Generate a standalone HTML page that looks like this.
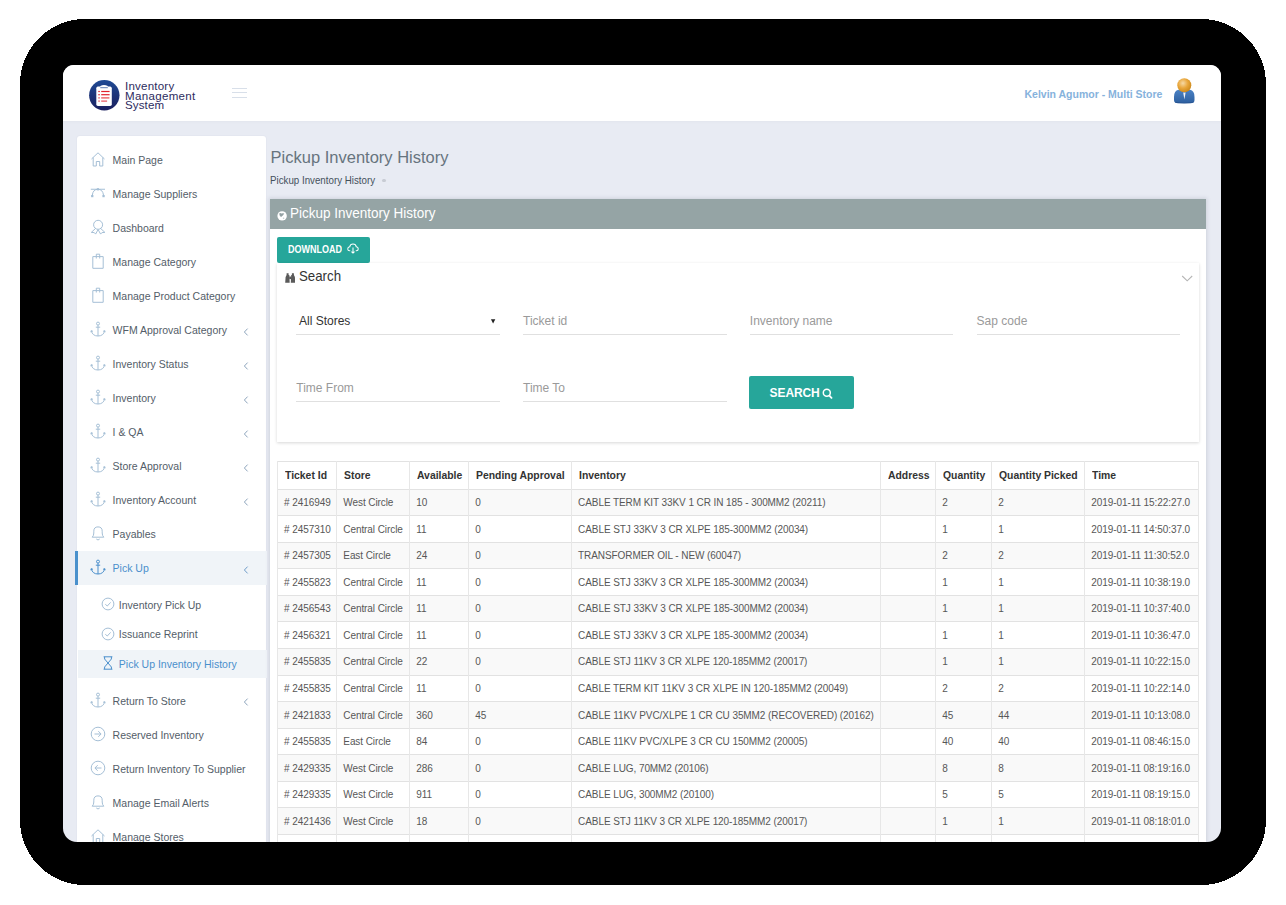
<!DOCTYPE html>
<html><head><meta charset="utf-8"><title>Pickup Inventory History</title>
<style>
html,body{margin:0;padding:0;background:#fff;width:1286px;height:905px;overflow:hidden;font-family:"Liberation Sans", sans-serif;}
.screen{position:absolute;left:0;top:0;width:1286px;height:905px;clip-path:inset(65px 65px 63px 63px round 11px 11px 14px 14px);}
.t{position:absolute;white-space:pre;line-height:1;}
.r{position:absolute;}
</style></head><body>
<svg style="position:absolute;left:0;top:0" width="1286" height="905"><rect x="20" y="19" width="1246" height="866" rx="65" ry="65" fill="#000" shape-rendering="crispEdges"/></svg>
<div class="screen">
<div class="r" style="left:63.00px;top:65.00px;width:1158.00px;height:777.00px;background:#e8ebf3"></div>
<div class="r" style="left:63.00px;top:65.00px;width:1158.00px;height:56.00px;background:#fff"></div>
<div class="r" style="left:63.00px;top:121.00px;width:1158.00px;height:3.00px;background:linear-gradient(rgba(0,0,0,0.018),rgba(0,0,0,0))"></div>
<svg class="r" style="left:88px;top:79px" width="33" height="33" viewBox="0 0 33 33">
<defs><linearGradient id="lg" x1="0" y1="0" x2="0" y2="1"><stop offset="0" stop-color="#1f4a94"/><stop offset="1" stop-color="#1b1f5e"/></linearGradient></defs>
<circle cx="16.3" cy="16.3" r="15.2" fill="url(#lg)"/>
<rect x="8.3" y="7.6" width="15.5" height="19.3" rx="1.6" fill="#fff"/>
<path d="M12.3 8.6 L12.3 7 Q16 5.2 19.8 7 L19.8 8.6 Z" fill="#fff"/>
<path d="M12.3 8.7 H19.8" stroke="#1f4a94" stroke-width="0.7"/>
<g fill="#e0232e"><rect x="10.3" y="11.9" width="1.5" height="1.2"/><rect x="13.2" y="11.9" width="8.4" height="1.2"/>
<rect x="10.3" y="15.1" width="1.5" height="1.2"/><rect x="13.2" y="15.1" width="8.4" height="1.2"/>
<rect x="10.3" y="18.3" width="1.5" height="1.2" opacity="0.85"/><rect x="13.2" y="18.3" width="8.2" height="1.2" opacity="0.85"/>
<rect x="10.3" y="21.5" width="1.5" height="1.2" opacity="0.8"/><rect x="13.2" y="21.5" width="5.9" height="1.2" opacity="0.8"/></g>
</svg>
<div class="t" style="left:124.50px;top:80.69px;font-size:11px;color:#2d2b5e;font-weight:400;transform:scaleX(1.05);transform-origin:0 0;letter-spacing:0.2px">Inventory</div>
<div class="t" style="left:124.50px;top:91.19px;font-size:11px;color:#2d2b5e;font-weight:400;transform:scaleX(1.05);transform-origin:0 0;letter-spacing:0.3px">Management</div>
<div class="t" style="left:124.50px;top:99.59px;font-size:11px;color:#2d2b5e;font-weight:400;transform:scaleX(1.05);transform-origin:0 0;letter-spacing:0.1px">System</div>
<div class="r" style="left:232.00px;top:87.70px;width:15.00px;height:1.40px;background:#d8dfe9"></div>
<div class="r" style="left:232.00px;top:91.90px;width:15.00px;height:1.40px;background:#d8dfe9"></div>
<div class="r" style="left:232.00px;top:96.70px;width:15.00px;height:1.40px;background:#d8dfe9"></div>
<div class="t" style="left:1024.50px;top:89.31px;font-size:10.5px;color:#86b2dc;font-weight:700;">Kelvin Agumor - Multi Store</div>
<svg class="r" style="left:1172px;top:76px" width="25" height="30" viewBox="0 0 25 30">
<defs><radialGradient id="hg" cx="0.4" cy="0.35" r="0.7"><stop offset="0" stop-color="#f6d9a6"/><stop offset="0.5" stop-color="#e9a73c"/><stop offset="1" stop-color="#c98516"/></radialGradient>
<linearGradient id="bg2" x1="0" y1="0" x2="0" y2="1"><stop offset="0" stop-color="#4b82c4"/><stop offset="1" stop-color="#2d5f9f"/></linearGradient></defs>
<path d="M2 21 Q2 14.5 6.5 13.8 Q9 13.4 12.3 16 Q15.6 13.4 18 13.8 Q22.5 14.5 22.5 21 L22.5 24 Q22.5 27.2 18.5 27.2 L6 27.2 Q2 27.2 2 24 Z" fill="url(#bg2)"/><path d="M3 26.3 Q12.3 28 21.5 26.3" stroke="#244f8a" stroke-width="1" fill="none" opacity="0.6"/>
<path d="M11.2 16.5 L13.6 16.5 L12.4 23.5 Z" fill="#f4f4f4"/>
<circle cx="12.3" cy="9.3" r="7" fill="url(#hg)"/>
</svg>
<div class="r" style="left:77.00px;top:136.20px;width:189.20px;height:720.00px;background:#fff;border-radius:3px 3px 0 0;box-shadow:0 0 2px rgba(30,40,80,0.07)"></div>
<svg class="r" style="left:90.30px;top:151.40px" width="16" height="16" viewBox="0 0 16 16" stroke="#a5bfd6" stroke-width="1" fill="#a5bfd6"><path d="M1.5 8 L8 1.8 L14.5 8 M3.2 6.5 V15 H6.3 V10.5 H9.7 V15 H12.8 V6.5" fill="none"/></svg>
<div class="t" style="left:112.60px;top:155.01px;font-size:10.5px;color:#535d68;font-weight:400;">Main Page</div>
<svg class="r" style="left:90.30px;top:185.40px" width="16" height="16" viewBox="0 0 16 16" stroke="#a5bfd6" stroke-width="1" fill="#a5bfd6"><path d="M2.3 10.2 Q3 4.3 7.9 4.3 Q12.8 4.3 13.5 10.2" fill="none"/><path d="M0.8 4.3 H15" stroke-width="1.1"/><rect x="6.8" y="3.2" width="2.2" height="2.2" stroke="none"/><rect x="1.1" y="10" width="2.3" height="2.2" stroke="none"/><rect x="12.4" y="10" width="2.3" height="2.2" stroke="none"/></svg>
<div class="t" style="left:112.60px;top:189.01px;font-size:10.5px;color:#535d68;font-weight:400;">Manage Suppliers</div>
<svg class="r" style="left:90.30px;top:219.40px" width="16" height="16" viewBox="0 0 16 16" stroke="#a5bfd6" stroke-width="1" fill="#a5bfd6"><circle cx="8.1" cy="5.8" r="4.5" fill="none"/><path d="M5.6 9.4 L1.3 13.4 L4.3 13.6 L5.6 15.1 L8.1 10.6 L10.6 15.1 L11.9 13.6 L14.9 13.4 L10.6 9.4" fill="none"/></svg>
<div class="t" style="left:112.60px;top:223.01px;font-size:10.5px;color:#535d68;font-weight:400;">Dashboard</div>
<svg class="r" style="left:90.30px;top:253.40px" width="16" height="16" viewBox="0 0 16 16" stroke="#a5bfd6" stroke-width="1" fill="#a5bfd6"><path d="M2.8 3.6 H13.2 V15.3 H2.8 Z" fill="none"/><path d="M6.3 5.5 V1.2 H9.7 V5.5" fill="none"/></svg>
<div class="t" style="left:112.60px;top:257.01px;font-size:10.5px;color:#535d68;font-weight:400;">Manage Category</div>
<svg class="r" style="left:90.30px;top:287.40px" width="16" height="16" viewBox="0 0 16 16" stroke="#a5bfd6" stroke-width="1" fill="#a5bfd6"><path d="M2.8 3.6 H13.2 V15.3 H2.8 Z" fill="none"/><path d="M6.3 5.5 V1.2 H9.7 V5.5" fill="none"/></svg>
<div class="t" style="left:112.60px;top:291.01px;font-size:10.5px;color:#535d68;font-weight:400;">Manage Product Category</div>
<svg class="r" style="left:90.30px;top:321.40px" width="16" height="16" viewBox="0 0 16 16" stroke="#a5bfd6" stroke-width="1" fill="#a5bfd6"><circle cx="8" cy="2.6" r="1.5" fill="none"/><path d="M8 4.1 V15 M5.8 6.2 H10.2 M1.3 9.8 Q2.5 15 8 15 Q13.5 15 14.7 9.8 M0.8 11.2 L1.3 9.6 L3 10.4 M15.2 11.2 L14.7 9.6 L13 10.4" fill="none"/></svg>
<div class="t" style="left:112.60px;top:325.01px;font-size:10.5px;color:#535d68;font-weight:400;">WFM Approval Category</div>
<svg class="r" style="left:243.00px;top:326.90px" width="6" height="10" viewBox="0 0 6 10"><path d="M4.6 1.6 L1.4 5 L4.6 8.4" fill="none" stroke="#8ea5bd" stroke-width="1"/></svg>
<svg class="r" style="left:90.30px;top:355.40px" width="16" height="16" viewBox="0 0 16 16" stroke="#a5bfd6" stroke-width="1" fill="#a5bfd6"><circle cx="8" cy="2.6" r="1.5" fill="none"/><path d="M8 4.1 V15 M5.8 6.2 H10.2 M1.3 9.8 Q2.5 15 8 15 Q13.5 15 14.7 9.8 M0.8 11.2 L1.3 9.6 L3 10.4 M15.2 11.2 L14.7 9.6 L13 10.4" fill="none"/></svg>
<div class="t" style="left:112.60px;top:359.01px;font-size:10.5px;color:#535d68;font-weight:400;">Inventory Status</div>
<svg class="r" style="left:243.00px;top:360.90px" width="6" height="10" viewBox="0 0 6 10"><path d="M4.6 1.6 L1.4 5 L4.6 8.4" fill="none" stroke="#8ea5bd" stroke-width="1"/></svg>
<svg class="r" style="left:90.30px;top:389.40px" width="16" height="16" viewBox="0 0 16 16" stroke="#a5bfd6" stroke-width="1" fill="#a5bfd6"><circle cx="8" cy="2.6" r="1.5" fill="none"/><path d="M8 4.1 V15 M5.8 6.2 H10.2 M1.3 9.8 Q2.5 15 8 15 Q13.5 15 14.7 9.8 M0.8 11.2 L1.3 9.6 L3 10.4 M15.2 11.2 L14.7 9.6 L13 10.4" fill="none"/></svg>
<div class="t" style="left:112.60px;top:393.01px;font-size:10.5px;color:#535d68;font-weight:400;">Inventory</div>
<svg class="r" style="left:243.00px;top:394.90px" width="6" height="10" viewBox="0 0 6 10"><path d="M4.6 1.6 L1.4 5 L4.6 8.4" fill="none" stroke="#8ea5bd" stroke-width="1"/></svg>
<svg class="r" style="left:90.30px;top:423.40px" width="16" height="16" viewBox="0 0 16 16" stroke="#a5bfd6" stroke-width="1" fill="#a5bfd6"><circle cx="8" cy="2.6" r="1.5" fill="none"/><path d="M8 4.1 V15 M5.8 6.2 H10.2 M1.3 9.8 Q2.5 15 8 15 Q13.5 15 14.7 9.8 M0.8 11.2 L1.3 9.6 L3 10.4 M15.2 11.2 L14.7 9.6 L13 10.4" fill="none"/></svg>
<div class="t" style="left:112.60px;top:427.01px;font-size:10.5px;color:#535d68;font-weight:400;">I &amp; QA</div>
<svg class="r" style="left:243.00px;top:428.90px" width="6" height="10" viewBox="0 0 6 10"><path d="M4.6 1.6 L1.4 5 L4.6 8.4" fill="none" stroke="#8ea5bd" stroke-width="1"/></svg>
<svg class="r" style="left:90.30px;top:457.40px" width="16" height="16" viewBox="0 0 16 16" stroke="#a5bfd6" stroke-width="1" fill="#a5bfd6"><circle cx="8" cy="2.6" r="1.5" fill="none"/><path d="M8 4.1 V15 M5.8 6.2 H10.2 M1.3 9.8 Q2.5 15 8 15 Q13.5 15 14.7 9.8 M0.8 11.2 L1.3 9.6 L3 10.4 M15.2 11.2 L14.7 9.6 L13 10.4" fill="none"/></svg>
<div class="t" style="left:112.60px;top:461.01px;font-size:10.5px;color:#535d68;font-weight:400;">Store Approval</div>
<svg class="r" style="left:243.00px;top:462.90px" width="6" height="10" viewBox="0 0 6 10"><path d="M4.6 1.6 L1.4 5 L4.6 8.4" fill="none" stroke="#8ea5bd" stroke-width="1"/></svg>
<svg class="r" style="left:90.30px;top:491.40px" width="16" height="16" viewBox="0 0 16 16" stroke="#a5bfd6" stroke-width="1" fill="#a5bfd6"><circle cx="8" cy="2.6" r="1.5" fill="none"/><path d="M8 4.1 V15 M5.8 6.2 H10.2 M1.3 9.8 Q2.5 15 8 15 Q13.5 15 14.7 9.8 M0.8 11.2 L1.3 9.6 L3 10.4 M15.2 11.2 L14.7 9.6 L13 10.4" fill="none"/></svg>
<div class="t" style="left:112.60px;top:495.01px;font-size:10.5px;color:#535d68;font-weight:400;">Inventory Account</div>
<svg class="r" style="left:243.00px;top:496.90px" width="6" height="10" viewBox="0 0 6 10"><path d="M4.6 1.6 L1.4 5 L4.6 8.4" fill="none" stroke="#8ea5bd" stroke-width="1"/></svg>
<svg class="r" style="left:90.30px;top:525.40px" width="16" height="16" viewBox="0 0 16 16" stroke="#a5bfd6" stroke-width="1" fill="#a5bfd6"><path d="M2.2 12.2 Q3.8 10.8 3.8 8 V6.2 Q3.8 1.9 8 1.9 Q12.2 1.9 12.2 6.2 V8 Q12.2 10.8 13.8 12.2 Z" fill="none"/><path d="M6.3 14 Q8 16 9.7 14" fill="none"/></svg>
<div class="t" style="left:112.60px;top:529.01px;font-size:10.5px;color:#535d68;font-weight:400;">Payables</div>
<div class="r" style="left:75.00px;top:551.40px;width:191.80px;height:33.20px;background:#f0f4f8"></div>
<div class="r" style="left:75.00px;top:551.40px;width:2.60px;height:33.20px;background:#4a90cc"></div>
<svg class="r" style="left:90.30px;top:559.40px" width="16" height="16" viewBox="0 0 16 16" stroke="#4a8fcc" stroke-width="1" fill="#4a8fcc"><circle cx="8" cy="2.6" r="1.5" fill="none"/><path d="M8 4.1 V15 M5.8 6.2 H10.2 M1.3 9.8 Q2.5 15 8 15 Q13.5 15 14.7 9.8 M0.8 11.2 L1.3 9.6 L3 10.4 M15.2 11.2 L14.7 9.6 L13 10.4" fill="none"/></svg>
<div class="t" style="left:112.60px;top:563.01px;font-size:10.5px;color:#4a8fcc;font-weight:400;">Pick Up</div>
<svg class="r" style="left:243.00px;top:564.90px" width="6" height="10" viewBox="0 0 6 10"><path d="M4.6 1.6 L1.4 5 L4.6 8.4" fill="none" stroke="#6f9cc9" stroke-width="1"/></svg>
<div class="t" style="left:118.80px;top:599.91px;font-size:10.5px;color:#535d68;font-weight:400;">Inventory Pick Up</div>
<svg class="r" style="left:99.90px;top:595.90px" width="16" height="16" viewBox="0 0 16 16" stroke="#a5bfd6" stroke-width="1" fill="#a5bfd6"><circle cx="8" cy="8" r="5.9" fill="none"/><path d="M5.3 8.3 L7.3 10 L10.6 6.4" fill="none"/></svg>
<div class="t" style="left:118.80px;top:629.11px;font-size:10.5px;color:#535d68;font-weight:400;">Issuance Reprint</div>
<svg class="r" style="left:99.90px;top:625.80px" width="16" height="16" viewBox="0 0 16 16" stroke="#a5bfd6" stroke-width="1" fill="#a5bfd6"><circle cx="8" cy="8" r="5.9" fill="none"/><path d="M5.3 8.3 L7.3 10 L10.6 6.4" fill="none"/></svg>
<div class="r" style="left:77.50px;top:650.00px;width:189.30px;height:28.00px;background:#f0f4f8"></div>
<svg class="r" style="left:100.00px;top:654.50px" width="16" height="16" viewBox="0 0 16 16" stroke="#4a8fcc" stroke-width="1" fill="#4a8fcc"><path d="M3.6 1.8 H12.4 M3.6 14.2 H12.4 M4.6 1.8 V4 L8 8 L4.6 12 V14.2 M11.4 1.8 V4 L8 8 L11.4 12 V14.2" fill="none"/></svg>
<div class="t" style="left:118.80px;top:658.71px;font-size:10.5px;color:#4a8fcc;font-weight:400;">Pick Up Inventory History</div>
<svg class="r" style="left:90.30px;top:691.90px" width="16" height="16" viewBox="0 0 16 16" stroke="#a5bfd6" stroke-width="1" fill="#a5bfd6"><circle cx="8" cy="2.6" r="1.5" fill="none"/><path d="M8 4.1 V15 M5.8 6.2 H10.2 M1.3 9.8 Q2.5 15 8 15 Q13.5 15 14.7 9.8 M0.8 11.2 L1.3 9.6 L3 10.4 M15.2 11.2 L14.7 9.6 L13 10.4" fill="none"/></svg>
<div class="t" style="left:112.60px;top:695.51px;font-size:10.5px;color:#535d68;font-weight:400;">Return To Store</div>
<svg class="r" style="left:243.00px;top:697.40px" width="6" height="10" viewBox="0 0 6 10"><path d="M4.6 1.6 L1.4 5 L4.6 8.4" fill="none" stroke="#8ea5bd" stroke-width="1"/></svg>
<svg class="r" style="left:90.30px;top:725.90px" width="16" height="16" viewBox="0 0 16 16" stroke="#a5bfd6" stroke-width="1" fill="#a5bfd6"><circle cx="8" cy="8" r="6.8" fill="none"/><path d="M4.5 8 H11 M8.3 5.2 L11.1 8 L8.3 10.8" fill="none"/></svg>
<div class="t" style="left:112.60px;top:729.51px;font-size:10.5px;color:#535d68;font-weight:400;">Reserved Inventory</div>
<svg class="r" style="left:90.30px;top:759.90px" width="16" height="16" viewBox="0 0 16 16" stroke="#a5bfd6" stroke-width="1" fill="#a5bfd6"><circle cx="8" cy="8" r="6.8" fill="none"/><path d="M11.5 8 H5 M7.7 5.2 L4.9 8 L7.7 10.8" fill="none"/></svg>
<div class="t" style="left:112.60px;top:763.51px;font-size:10.5px;color:#535d68;font-weight:400;">Return Inventory To Supplier</div>
<svg class="r" style="left:90.30px;top:793.90px" width="16" height="16" viewBox="0 0 16 16" stroke="#a5bfd6" stroke-width="1" fill="#a5bfd6"><path d="M2.2 12.2 Q3.8 10.8 3.8 8 V6.2 Q3.8 1.9 8 1.9 Q12.2 1.9 12.2 6.2 V8 Q12.2 10.8 13.8 12.2 Z" fill="none"/><path d="M6.3 14 Q8 16 9.7 14" fill="none"/></svg>
<div class="t" style="left:112.60px;top:797.51px;font-size:10.5px;color:#535d68;font-weight:400;">Manage Email Alerts</div>
<svg class="r" style="left:90.30px;top:827.90px" width="16" height="16" viewBox="0 0 16 16" stroke="#a5bfd6" stroke-width="1" fill="#a5bfd6"><path d="M1.5 8 L8 1.8 L14.5 8 M3.2 6.5 V15 H6.3 V10.5 H9.7 V15 H12.8 V6.5" fill="none"/></svg>
<div class="t" style="left:112.60px;top:831.51px;font-size:10.5px;color:#535d68;font-weight:400;">Manage Stores</div>
<div class="t" style="left:270.60px;top:148.53px;font-size:16.5px;color:#67747e;font-weight:400;">Pickup Inventory History</div>
<div class="t" style="left:270.20px;top:174.81px;font-size:10.5px;color:#44505c;font-weight:400;transform:scaleX(0.928);transform-origin:0 0;">Pickup Inventory History</div>
<div class="r" style="left:382.3px;top:178.8px;width:3.6px;height:3.6px;border-radius:50%;background:#c8ccd4"></div>
<div class="r" style="left:269.80px;top:199.30px;width:936.30px;height:700.00px;background:#fff;box-shadow:0 0 4px 1px rgba(40,50,80,0.13)"></div>
<div class="r" style="left:269.80px;top:199.30px;width:936.30px;height:30.00px;background:#95a4a5"></div>
<svg class="r" style="left:276.7px;top:210.5px" width="10" height="10" viewBox="0 0 10 10">
<circle cx="5.1" cy="4.9" r="4.7" fill="#fff"/><path d="M2.4 2.2 Q3.6 1.6 4.4 2.6 Q5.6 2.2 7.3 2.5 Q6.4 4.2 4.1 6 Q2.6 5 2.4 3.4 Z" fill="#93a1a3"/><circle cx="6.6" cy="7.2" r="0.8" fill="#c5cdd0"/></svg>
<div class="t" style="left:290.20px;top:205.75px;font-size:14px;color:#ffffff;font-weight:400;transform:scaleX(0.964);transform-origin:0 0;">Pickup Inventory History</div>
<div class="r" style="left:277.00px;top:237.30px;width:93.00px;height:25.50px;background:#26a69a;border-radius:2px"></div>
<div class="t" style="left:288.00px;top:245.44px;font-size:10px;color:#fff;font-weight:700;transform:scaleX(0.9);transform-origin:0 0;">DOWNLOAD</div>
<svg class="r" style="left:347.2px;top:243.3px" width="12" height="11" viewBox="0 0 13 12">
<path d="M3.5 8.5 H3 Q0.8 8.5 0.8 6.3 Q0.8 4.2 3 4 Q3.5 1 6.5 1 Q9.6 1 10 4 Q12.2 4.2 12.2 6.3 Q12.2 8.5 10 8.5 H9.5" fill="none" stroke="#fff" stroke-width="1.1"/>
<path d="M6.5 5 V11 M4.8 9.3 L6.5 11 L8.2 9.3" fill="none" stroke="#fff" stroke-width="1.1"/></svg>
<div class="r" style="left:276.80px;top:262.70px;width:922.70px;height:179.00px;background:#fff;box-shadow:0 1px 3px rgba(0,0,0,0.16)"></div>
<svg class="r" style="left:284.8px;top:272.6px" width="10.5" height="10" viewBox="0 0 10.5 10">
<path d="M1.6 0.3 H3.6 V2 H4.3 L4.7 9.8 H0.2 L0.6 4 L1.6 2 Z M8.9 0.3 H6.9 V2 H6.2 L5.8 9.8 H10.3 L9.9 4 L8.9 2 Z" fill="#5a5a5a"/><rect x="4.2" y="3.5" width="2.1" height="2.6" fill="#5a5a5a"/></svg>
<div class="t" style="left:298.50px;top:268.30px;font-size:15px;color:#333;font-weight:400;transform:scaleX(0.885);transform-origin:0 0;">Search</div>
<svg class="r" style="left:1180.5px;top:273.5px" width="13" height="9" viewBox="0 0 13 9"><path d="M1.2 2 L6.2 6.8 L11.2 2" fill="none" stroke="#b5b5b5" stroke-width="1.1"/></svg>
<div class="t" style="left:296.30px;top:315.04px;font-size:12px;color:#333;font-weight:400;"></div>
<div class="r" style="left:296.30px;top:333.80px;width:204.00px;height:1.00px;background:#e0e0e0"></div>
<div class="t" style="left:299.00px;top:315.04px;font-size:12px;color:#333;font-weight:400;">All Stores</div>
<svg class="r" style="left:490px;top:318px" width="7" height="7" viewBox="0 0 7 7"><path d="M0.9 1.2 H5.3 L3.1 5.6 Z" fill="#222"/></svg>
<div class="t" style="left:523.00px;top:315.04px;font-size:12px;color:#9a9a9a;font-weight:400;">Ticket id</div>
<div class="r" style="left:523.00px;top:333.80px;width:204.00px;height:1.00px;background:#e0e0e0"></div>
<div class="t" style="left:749.80px;top:315.04px;font-size:12px;color:#9a9a9a;font-weight:400;">Inventory name</div>
<div class="r" style="left:749.80px;top:333.80px;width:203.50px;height:1.00px;background:#e0e0e0"></div>
<div class="t" style="left:976.60px;top:315.04px;font-size:12px;color:#9a9a9a;font-weight:400;">Sap code</div>
<div class="r" style="left:976.60px;top:333.80px;width:203.90px;height:1.00px;background:#e0e0e0"></div>
<div class="t" style="left:296.30px;top:382.04px;font-size:12px;color:#9a9a9a;font-weight:400;">Time From</div>
<div class="r" style="left:296.30px;top:400.70px;width:204.00px;height:1.00px;background:#e0e0e0"></div>
<div class="t" style="left:523.00px;top:382.04px;font-size:12px;color:#9a9a9a;font-weight:400;">Time To</div>
<div class="r" style="left:523.00px;top:400.70px;width:204.00px;height:1.00px;background:#e0e0e0"></div>
<div class="r" style="left:749.40px;top:376.20px;width:104.50px;height:32.40px;background:#26a69a;border-radius:2px"></div>
<div class="t" style="left:769.60px;top:386.84px;font-size:12px;color:#fff;font-weight:700;letter-spacing:-0.1px">SEARCH</div>
<svg class="r" style="left:821.5px;top:387.5px" width="11" height="12" viewBox="0 0 11 12"><circle cx="4.8" cy="4.8" r="3.5" fill="none" stroke="#fff" stroke-width="1.5"/><path d="M7.2 7.4 L10 10.5" stroke="#fff" stroke-width="1.8"/></svg>
<div class="r" style="left:277.30px;top:489.20px;width:921.20px;height:26.55px;background:#f9f9f9"></div>
<div class="r" style="left:277.30px;top:542.30px;width:921.20px;height:26.55px;background:#f9f9f9"></div>
<div class="r" style="left:277.30px;top:595.40px;width:921.20px;height:26.55px;background:#f9f9f9"></div>
<div class="r" style="left:277.30px;top:648.50px;width:921.20px;height:26.55px;background:#f9f9f9"></div>
<div class="r" style="left:277.30px;top:701.60px;width:921.20px;height:26.55px;background:#f9f9f9"></div>
<div class="r" style="left:277.30px;top:754.70px;width:921.20px;height:26.55px;background:#f9f9f9"></div>
<div class="r" style="left:277.30px;top:807.80px;width:921.20px;height:26.55px;background:#f9f9f9"></div>
<div class="r" style="left:277.00px;top:461.00px;width:921.00px;height:1.00px;background:#e2e2e2"></div>
<div class="r" style="left:277.00px;top:489.00px;width:921.00px;height:1.00px;background:#e2e2e2"></div>
<div class="r" style="left:277.00px;top:515.00px;width:921.00px;height:1.00px;background:#e2e2e2"></div>
<div class="r" style="left:277.00px;top:542.00px;width:921.00px;height:1.00px;background:#e2e2e2"></div>
<div class="r" style="left:277.00px;top:568.00px;width:921.00px;height:1.00px;background:#e2e2e2"></div>
<div class="r" style="left:277.00px;top:595.00px;width:921.00px;height:1.00px;background:#e2e2e2"></div>
<div class="r" style="left:277.00px;top:621.00px;width:921.00px;height:1.00px;background:#e2e2e2"></div>
<div class="r" style="left:277.00px;top:648.00px;width:921.00px;height:1.00px;background:#e2e2e2"></div>
<div class="r" style="left:277.00px;top:675.00px;width:921.00px;height:1.00px;background:#e2e2e2"></div>
<div class="r" style="left:277.00px;top:701.00px;width:921.00px;height:1.00px;background:#e2e2e2"></div>
<div class="r" style="left:277.00px;top:728.00px;width:921.00px;height:1.00px;background:#e2e2e2"></div>
<div class="r" style="left:277.00px;top:754.00px;width:921.00px;height:1.00px;background:#e2e2e2"></div>
<div class="r" style="left:277.00px;top:781.00px;width:921.00px;height:1.00px;background:#e2e2e2"></div>
<div class="r" style="left:277.00px;top:807.00px;width:921.00px;height:1.00px;background:#e2e2e2"></div>
<div class="r" style="left:277.00px;top:834.00px;width:921.00px;height:1.00px;background:#e2e2e2"></div>
<div class="r" style="left:277.00px;top:860.00px;width:921.00px;height:1.00px;background:#e2e2e2"></div>
<div class="r" style="left:277.00px;top:461.00px;width:1.00px;height:400.00px;background:#e7e7e7"></div>
<div class="r" style="left:336.00px;top:461.00px;width:1.00px;height:400.00px;background:#e7e7e7"></div>
<div class="r" style="left:409.00px;top:461.00px;width:1.00px;height:400.00px;background:#e7e7e7"></div>
<div class="r" style="left:468.00px;top:461.00px;width:1.00px;height:400.00px;background:#e7e7e7"></div>
<div class="r" style="left:571.00px;top:461.00px;width:1.00px;height:400.00px;background:#e7e7e7"></div>
<div class="r" style="left:880.00px;top:461.00px;width:1.00px;height:400.00px;background:#e7e7e7"></div>
<div class="r" style="left:935.00px;top:461.00px;width:1.00px;height:400.00px;background:#e7e7e7"></div>
<div class="r" style="left:991.00px;top:461.00px;width:1.00px;height:400.00px;background:#e7e7e7"></div>
<div class="r" style="left:1084.00px;top:461.00px;width:1.00px;height:400.00px;background:#e7e7e7"></div>
<div class="r" style="left:1198.00px;top:461.00px;width:1.00px;height:400.00px;background:#e7e7e7"></div>
<div class="t" style="left:284.50px;top:469.69px;font-size:11px;color:#333;font-weight:700;transform:scaleX(0.945);transform-origin:0 0;">Ticket Id</div>
<div class="t" style="left:343.70px;top:469.69px;font-size:11px;color:#333;font-weight:700;transform:scaleX(0.945);transform-origin:0 0;">Store</div>
<div class="t" style="left:416.70px;top:469.69px;font-size:11px;color:#333;font-weight:700;transform:scaleX(0.945);transform-origin:0 0;">Available</div>
<div class="t" style="left:475.60px;top:469.69px;font-size:11px;color:#333;font-weight:700;transform:scaleX(0.945);transform-origin:0 0;">Pending Approval</div>
<div class="t" style="left:578.50px;top:469.69px;font-size:11px;color:#333;font-weight:700;transform:scaleX(0.945);transform-origin:0 0;">Inventory</div>
<div class="t" style="left:887.70px;top:469.69px;font-size:11px;color:#333;font-weight:700;transform:scaleX(0.945);transform-origin:0 0;">Address</div>
<div class="t" style="left:942.60px;top:469.69px;font-size:11px;color:#333;font-weight:700;transform:scaleX(0.945);transform-origin:0 0;">Quantity</div>
<div class="t" style="left:998.60px;top:469.69px;font-size:11px;color:#333;font-weight:700;transform:scaleX(0.945);transform-origin:0 0;">Quantity Picked</div>
<div class="t" style="left:1091.70px;top:469.69px;font-size:11px;color:#333;font-weight:700;transform:scaleX(0.945);transform-origin:0 0;">Time</div>
<div class="t" style="left:284.10px;top:498.14px;font-size:10px;color:#575757;font-weight:400;letter-spacing:-0.08px"># 2416949</div>
<div class="t" style="left:343.30px;top:498.14px;font-size:10px;color:#575757;font-weight:400;letter-spacing:-0.08px">West Circle</div>
<div class="t" style="left:416.30px;top:498.14px;font-size:10px;color:#575757;font-weight:400;letter-spacing:-0.08px">10</div>
<div class="t" style="left:475.20px;top:498.14px;font-size:10px;color:#575757;font-weight:400;letter-spacing:-0.08px">0</div>
<div class="t" style="left:578.10px;top:498.14px;font-size:10px;color:#575757;font-weight:400;letter-spacing:-0.08px">CABLE TERM KIT 33KV 1 CR IN 185 - 300MM2 (20211)</div>
<div class="t" style="left:942.20px;top:498.14px;font-size:10px;color:#575757;font-weight:400;letter-spacing:-0.08px">2</div>
<div class="t" style="left:998.20px;top:498.14px;font-size:10px;color:#575757;font-weight:400;letter-spacing:-0.08px">2</div>
<div class="t" style="left:1091.30px;top:498.14px;font-size:10px;color:#575757;font-weight:400;letter-spacing:-0.08px">2019-01-11 15:22:27.0</div>
<div class="t" style="left:284.10px;top:524.68px;font-size:10px;color:#575757;font-weight:400;letter-spacing:-0.08px"># 2457310</div>
<div class="t" style="left:343.30px;top:524.68px;font-size:10px;color:#575757;font-weight:400;letter-spacing:-0.08px">Central Circle</div>
<div class="t" style="left:416.30px;top:524.68px;font-size:10px;color:#575757;font-weight:400;letter-spacing:-0.08px">11</div>
<div class="t" style="left:475.20px;top:524.68px;font-size:10px;color:#575757;font-weight:400;letter-spacing:-0.08px">0</div>
<div class="t" style="left:578.10px;top:524.68px;font-size:10px;color:#575757;font-weight:400;letter-spacing:-0.08px">CABLE STJ 33KV 3 CR XLPE 185-300MM2 (20034)</div>
<div class="t" style="left:942.20px;top:524.68px;font-size:10px;color:#575757;font-weight:400;letter-spacing:-0.08px">1</div>
<div class="t" style="left:998.20px;top:524.68px;font-size:10px;color:#575757;font-weight:400;letter-spacing:-0.08px">1</div>
<div class="t" style="left:1091.30px;top:524.68px;font-size:10px;color:#575757;font-weight:400;letter-spacing:-0.08px">2019-01-11 14:50:37.0</div>
<div class="t" style="left:284.10px;top:551.24px;font-size:10px;color:#575757;font-weight:400;letter-spacing:-0.08px"># 2457305</div>
<div class="t" style="left:343.30px;top:551.24px;font-size:10px;color:#575757;font-weight:400;letter-spacing:-0.08px">East Circle</div>
<div class="t" style="left:416.30px;top:551.24px;font-size:10px;color:#575757;font-weight:400;letter-spacing:-0.08px">24</div>
<div class="t" style="left:475.20px;top:551.24px;font-size:10px;color:#575757;font-weight:400;letter-spacing:-0.08px">0</div>
<div class="t" style="left:578.10px;top:551.24px;font-size:10px;color:#575757;font-weight:400;letter-spacing:-0.08px">TRANSFORMER OIL - NEW (60047)</div>
<div class="t" style="left:942.20px;top:551.24px;font-size:10px;color:#575757;font-weight:400;letter-spacing:-0.08px">2</div>
<div class="t" style="left:998.20px;top:551.24px;font-size:10px;color:#575757;font-weight:400;letter-spacing:-0.08px">2</div>
<div class="t" style="left:1091.30px;top:551.24px;font-size:10px;color:#575757;font-weight:400;letter-spacing:-0.08px">2019-01-11 11:30:52.0</div>
<div class="t" style="left:284.10px;top:577.78px;font-size:10px;color:#575757;font-weight:400;letter-spacing:-0.08px"># 2455823</div>
<div class="t" style="left:343.30px;top:577.78px;font-size:10px;color:#575757;font-weight:400;letter-spacing:-0.08px">Central Circle</div>
<div class="t" style="left:416.30px;top:577.78px;font-size:10px;color:#575757;font-weight:400;letter-spacing:-0.08px">11</div>
<div class="t" style="left:475.20px;top:577.78px;font-size:10px;color:#575757;font-weight:400;letter-spacing:-0.08px">0</div>
<div class="t" style="left:578.10px;top:577.78px;font-size:10px;color:#575757;font-weight:400;letter-spacing:-0.08px">CABLE STJ 33KV 3 CR XLPE 185-300MM2 (20034)</div>
<div class="t" style="left:942.20px;top:577.78px;font-size:10px;color:#575757;font-weight:400;letter-spacing:-0.08px">1</div>
<div class="t" style="left:998.20px;top:577.78px;font-size:10px;color:#575757;font-weight:400;letter-spacing:-0.08px">1</div>
<div class="t" style="left:1091.30px;top:577.78px;font-size:10px;color:#575757;font-weight:400;letter-spacing:-0.08px">2019-01-11 10:38:19.0</div>
<div class="t" style="left:284.10px;top:604.34px;font-size:10px;color:#575757;font-weight:400;letter-spacing:-0.08px"># 2456543</div>
<div class="t" style="left:343.30px;top:604.34px;font-size:10px;color:#575757;font-weight:400;letter-spacing:-0.08px">Central Circle</div>
<div class="t" style="left:416.30px;top:604.34px;font-size:10px;color:#575757;font-weight:400;letter-spacing:-0.08px">11</div>
<div class="t" style="left:475.20px;top:604.34px;font-size:10px;color:#575757;font-weight:400;letter-spacing:-0.08px">0</div>
<div class="t" style="left:578.10px;top:604.34px;font-size:10px;color:#575757;font-weight:400;letter-spacing:-0.08px">CABLE STJ 33KV 3 CR XLPE 185-300MM2 (20034)</div>
<div class="t" style="left:942.20px;top:604.34px;font-size:10px;color:#575757;font-weight:400;letter-spacing:-0.08px">1</div>
<div class="t" style="left:998.20px;top:604.34px;font-size:10px;color:#575757;font-weight:400;letter-spacing:-0.08px">1</div>
<div class="t" style="left:1091.30px;top:604.34px;font-size:10px;color:#575757;font-weight:400;letter-spacing:-0.08px">2019-01-11 10:37:40.0</div>
<div class="t" style="left:284.10px;top:630.88px;font-size:10px;color:#575757;font-weight:400;letter-spacing:-0.08px"># 2456321</div>
<div class="t" style="left:343.30px;top:630.88px;font-size:10px;color:#575757;font-weight:400;letter-spacing:-0.08px">Central Circle</div>
<div class="t" style="left:416.30px;top:630.88px;font-size:10px;color:#575757;font-weight:400;letter-spacing:-0.08px">11</div>
<div class="t" style="left:475.20px;top:630.88px;font-size:10px;color:#575757;font-weight:400;letter-spacing:-0.08px">0</div>
<div class="t" style="left:578.10px;top:630.88px;font-size:10px;color:#575757;font-weight:400;letter-spacing:-0.08px">CABLE STJ 33KV 3 CR XLPE 185-300MM2 (20034)</div>
<div class="t" style="left:942.20px;top:630.88px;font-size:10px;color:#575757;font-weight:400;letter-spacing:-0.08px">1</div>
<div class="t" style="left:998.20px;top:630.88px;font-size:10px;color:#575757;font-weight:400;letter-spacing:-0.08px">1</div>
<div class="t" style="left:1091.30px;top:630.88px;font-size:10px;color:#575757;font-weight:400;letter-spacing:-0.08px">2019-01-11 10:36:47.0</div>
<div class="t" style="left:284.10px;top:657.44px;font-size:10px;color:#575757;font-weight:400;letter-spacing:-0.08px"># 2455835</div>
<div class="t" style="left:343.30px;top:657.44px;font-size:10px;color:#575757;font-weight:400;letter-spacing:-0.08px">Central Circle</div>
<div class="t" style="left:416.30px;top:657.44px;font-size:10px;color:#575757;font-weight:400;letter-spacing:-0.08px">22</div>
<div class="t" style="left:475.20px;top:657.44px;font-size:10px;color:#575757;font-weight:400;letter-spacing:-0.08px">0</div>
<div class="t" style="left:578.10px;top:657.44px;font-size:10px;color:#575757;font-weight:400;letter-spacing:-0.08px">CABLE STJ 11KV 3 CR XLPE 120-185MM2 (20017)</div>
<div class="t" style="left:942.20px;top:657.44px;font-size:10px;color:#575757;font-weight:400;letter-spacing:-0.08px">1</div>
<div class="t" style="left:998.20px;top:657.44px;font-size:10px;color:#575757;font-weight:400;letter-spacing:-0.08px">1</div>
<div class="t" style="left:1091.30px;top:657.44px;font-size:10px;color:#575757;font-weight:400;letter-spacing:-0.08px">2019-01-11 10:22:15.0</div>
<div class="t" style="left:284.10px;top:683.99px;font-size:10px;color:#575757;font-weight:400;letter-spacing:-0.08px"># 2455835</div>
<div class="t" style="left:343.30px;top:683.99px;font-size:10px;color:#575757;font-weight:400;letter-spacing:-0.08px">Central Circle</div>
<div class="t" style="left:416.30px;top:683.99px;font-size:10px;color:#575757;font-weight:400;letter-spacing:-0.08px">11</div>
<div class="t" style="left:475.20px;top:683.99px;font-size:10px;color:#575757;font-weight:400;letter-spacing:-0.08px">0</div>
<div class="t" style="left:578.10px;top:683.99px;font-size:10px;color:#575757;font-weight:400;letter-spacing:-0.08px">CABLE TERM KIT 11KV 3 CR XLPE IN 120-185MM2 (20049)</div>
<div class="t" style="left:942.20px;top:683.99px;font-size:10px;color:#575757;font-weight:400;letter-spacing:-0.08px">2</div>
<div class="t" style="left:998.20px;top:683.99px;font-size:10px;color:#575757;font-weight:400;letter-spacing:-0.08px">2</div>
<div class="t" style="left:1091.30px;top:683.99px;font-size:10px;color:#575757;font-weight:400;letter-spacing:-0.08px">2019-01-11 10:22:14.0</div>
<div class="t" style="left:284.10px;top:710.53px;font-size:10px;color:#575757;font-weight:400;letter-spacing:-0.08px"># 2421833</div>
<div class="t" style="left:343.30px;top:710.53px;font-size:10px;color:#575757;font-weight:400;letter-spacing:-0.08px">Central Circle</div>
<div class="t" style="left:416.30px;top:710.53px;font-size:10px;color:#575757;font-weight:400;letter-spacing:-0.08px">360</div>
<div class="t" style="left:475.20px;top:710.53px;font-size:10px;color:#575757;font-weight:400;letter-spacing:-0.08px">45</div>
<div class="t" style="left:578.10px;top:710.53px;font-size:10px;color:#575757;font-weight:400;letter-spacing:-0.08px">CABLE 11KV PVC/XLPE 1 CR CU 35MM2 (RECOVERED) (20162)</div>
<div class="t" style="left:942.20px;top:710.53px;font-size:10px;color:#575757;font-weight:400;letter-spacing:-0.08px">45</div>
<div class="t" style="left:998.20px;top:710.53px;font-size:10px;color:#575757;font-weight:400;letter-spacing:-0.08px">44</div>
<div class="t" style="left:1091.30px;top:710.53px;font-size:10px;color:#575757;font-weight:400;letter-spacing:-0.08px">2019-01-11 10:13:08.0</div>
<div class="t" style="left:284.10px;top:737.09px;font-size:10px;color:#575757;font-weight:400;letter-spacing:-0.08px"># 2455835</div>
<div class="t" style="left:343.30px;top:737.09px;font-size:10px;color:#575757;font-weight:400;letter-spacing:-0.08px">East Circle</div>
<div class="t" style="left:416.30px;top:737.09px;font-size:10px;color:#575757;font-weight:400;letter-spacing:-0.08px">84</div>
<div class="t" style="left:475.20px;top:737.09px;font-size:10px;color:#575757;font-weight:400;letter-spacing:-0.08px">0</div>
<div class="t" style="left:578.10px;top:737.09px;font-size:10px;color:#575757;font-weight:400;letter-spacing:-0.08px">CABLE 11KV PVC/XLPE 3 CR CU 150MM2 (20005)</div>
<div class="t" style="left:942.20px;top:737.09px;font-size:10px;color:#575757;font-weight:400;letter-spacing:-0.08px">40</div>
<div class="t" style="left:998.20px;top:737.09px;font-size:10px;color:#575757;font-weight:400;letter-spacing:-0.08px">40</div>
<div class="t" style="left:1091.30px;top:737.09px;font-size:10px;color:#575757;font-weight:400;letter-spacing:-0.08px">2019-01-11 08:46:15.0</div>
<div class="t" style="left:284.10px;top:763.63px;font-size:10px;color:#575757;font-weight:400;letter-spacing:-0.08px"># 2429335</div>
<div class="t" style="left:343.30px;top:763.63px;font-size:10px;color:#575757;font-weight:400;letter-spacing:-0.08px">West Circle</div>
<div class="t" style="left:416.30px;top:763.63px;font-size:10px;color:#575757;font-weight:400;letter-spacing:-0.08px">286</div>
<div class="t" style="left:475.20px;top:763.63px;font-size:10px;color:#575757;font-weight:400;letter-spacing:-0.08px">0</div>
<div class="t" style="left:578.10px;top:763.63px;font-size:10px;color:#575757;font-weight:400;letter-spacing:-0.08px">CABLE LUG, 70MM2 (20106)</div>
<div class="t" style="left:942.20px;top:763.63px;font-size:10px;color:#575757;font-weight:400;letter-spacing:-0.08px">8</div>
<div class="t" style="left:998.20px;top:763.63px;font-size:10px;color:#575757;font-weight:400;letter-spacing:-0.08px">8</div>
<div class="t" style="left:1091.30px;top:763.63px;font-size:10px;color:#575757;font-weight:400;letter-spacing:-0.08px">2019-01-11 08:19:16.0</div>
<div class="t" style="left:284.10px;top:790.19px;font-size:10px;color:#575757;font-weight:400;letter-spacing:-0.08px"># 2429335</div>
<div class="t" style="left:343.30px;top:790.19px;font-size:10px;color:#575757;font-weight:400;letter-spacing:-0.08px">West Circle</div>
<div class="t" style="left:416.30px;top:790.19px;font-size:10px;color:#575757;font-weight:400;letter-spacing:-0.08px">911</div>
<div class="t" style="left:475.20px;top:790.19px;font-size:10px;color:#575757;font-weight:400;letter-spacing:-0.08px">0</div>
<div class="t" style="left:578.10px;top:790.19px;font-size:10px;color:#575757;font-weight:400;letter-spacing:-0.08px">CABLE LUG, 300MM2 (20100)</div>
<div class="t" style="left:942.20px;top:790.19px;font-size:10px;color:#575757;font-weight:400;letter-spacing:-0.08px">5</div>
<div class="t" style="left:998.20px;top:790.19px;font-size:10px;color:#575757;font-weight:400;letter-spacing:-0.08px">5</div>
<div class="t" style="left:1091.30px;top:790.19px;font-size:10px;color:#575757;font-weight:400;letter-spacing:-0.08px">2019-01-11 08:19:15.0</div>
<div class="t" style="left:284.10px;top:816.74px;font-size:10px;color:#575757;font-weight:400;letter-spacing:-0.08px"># 2421436</div>
<div class="t" style="left:343.30px;top:816.74px;font-size:10px;color:#575757;font-weight:400;letter-spacing:-0.08px">West Circle</div>
<div class="t" style="left:416.30px;top:816.74px;font-size:10px;color:#575757;font-weight:400;letter-spacing:-0.08px">18</div>
<div class="t" style="left:475.20px;top:816.74px;font-size:10px;color:#575757;font-weight:400;letter-spacing:-0.08px">0</div>
<div class="t" style="left:578.10px;top:816.74px;font-size:10px;color:#575757;font-weight:400;letter-spacing:-0.08px">CABLE STJ 11KV 3 CR XLPE 120-185MM2 (20017)</div>
<div class="t" style="left:942.20px;top:816.74px;font-size:10px;color:#575757;font-weight:400;letter-spacing:-0.08px">1</div>
<div class="t" style="left:998.20px;top:816.74px;font-size:10px;color:#575757;font-weight:400;letter-spacing:-0.08px">1</div>
<div class="t" style="left:1091.30px;top:816.74px;font-size:10px;color:#575757;font-weight:400;letter-spacing:-0.08px">2019-01-11 08:18:01.0</div>
</div>
</body></html>
